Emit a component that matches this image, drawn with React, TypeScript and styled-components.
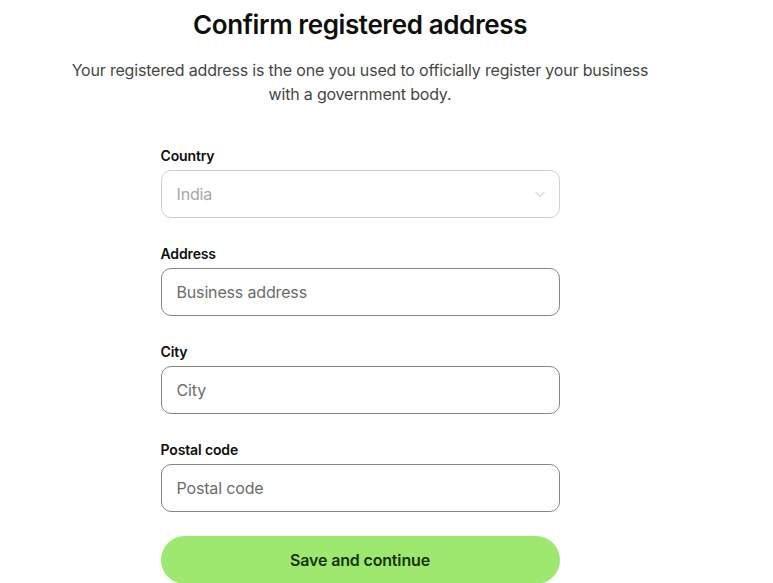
import styled, { createGlobalStyle } from "styled-components";

const GlobalStyle = createGlobalStyle`
  body {
    margin: 0;
    background: #fff;
    font-family: Inter, "Noto Sans", sans-serif;
    color: #0e0f0c;
  }
`;

const Page = styled.div`
  width: 720px;
  display: flex;
  flex-direction: column;
  align-items: center;
`;

const Title = styled.h1`
  margin: 8px 0 0;
  font-size: 26px;
  line-height: 34px;
  font-weight: 600;
  letter-spacing: -0.015em;
  color: #0e0f0c;
`;

const Lead = styled.p`
  margin: 16px 0 0;
  width: 600px;
  text-align: center;
  font-size: 16px;
  line-height: 24px;
  letter-spacing: -0.012em;
  color: #454745;
`;

const Form = styled.form`
  margin-top: 40px;
  width: 399px;
  display: flex;
  flex-direction: column;
  gap: 26px;
`;

const Field = styled.div`
  display: flex;
  flex-direction: column;
  gap: 4px;
`;

const Label = styled.label`
  font-size: 14px;
  line-height: 20px;
  font-weight: 600;
  letter-spacing: -0.01em;
  color: #0e0f0c;
`;

const Box = styled.div<{ $disabled?: boolean }>`
  position: relative;
  height: 48px;
  box-sizing: border-box;
  border: 1px solid ${(p) => (p.$disabled ? "#d0d1cf" : "#868685")};
  border-radius: 10px;
  display: flex;
  align-items: center;
  padding: 0 15px;
`;

const Input = styled.input`
  border: none;
  outline: none;
  padding: 0;
  width: 100%;
  font-family: inherit;
  font-size: 16px;
  letter-spacing: -0.01em;
  color: #0e0f0c;
  background: transparent;

  &::placeholder {
    color: #6a6c6a;
  }
`;

const SelectValue = styled.span`
  flex: 1;
  font-size: 16px;
  letter-spacing: -0.01em;
  color: #a6a7a6;
`;

const Chevron = styled.svg`
  width: 12px;
  height: 12px;
  margin-right: -2px;
`;

const SaveButton = styled.button`
  margin-top: -2px;
  height: 48px;
  border: none;
  border-radius: 24px;
  background: #9fe870;
  color: #163300;
  font-family: inherit;
  font-size: 16px;
  font-weight: 600;
  letter-spacing: -0.01em;
  cursor: pointer;
`;

const fields = [
  { label: "Address", placeholder: "Business address" },
  { label: "City", placeholder: "City" },
  { label: "Postal code", placeholder: "Postal code" },
];

export default function App() {
  return (
    <>
      <GlobalStyle />
      <Page>
        <Title>Confirm registered address</Title>
        <Lead>
          Your registered address is the one you used to officially register your business
          with a government body.
        </Lead>
        <Form onSubmit={(e) => e.preventDefault()}>
          <Field>
            <Label>Country</Label>
            <Box $disabled>
              <SelectValue>India</SelectValue>
              <Chevron viewBox="0 0 12 12" fill="none">
                <path d="M1.5 4l4.5 4.5L10.5 4" stroke="#d6d7d5" strokeWidth="1.2" />
              </Chevron>
            </Box>
          </Field>
          {fields.map((f) => (
            <Field key={f.label}>
              <Label>{f.label}</Label>
              <Box>
                <Input placeholder={f.placeholder} />
              </Box>
            </Field>
          ))}
          <SaveButton type="submit">Save and continue</SaveButton>
        </Form>
      </Page>
    </>
  );
}
